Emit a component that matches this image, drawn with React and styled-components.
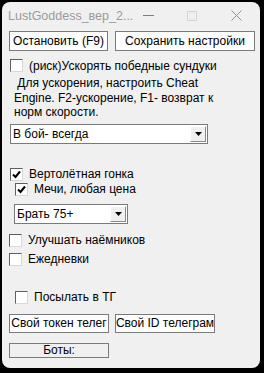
import React from "react";
import styled, { createGlobalStyle } from "styled-components";

const Global = createGlobalStyle`
  html, body {
    margin: 0;
    padding: 0;
    background: #000;
  }
  body {
    font-family: "Liberation Sans", Arial, sans-serif;
  }
`;

const Window = styled.div`
  margin: 2px 0 0 2px;
  width: 258px;
  height: 366px;
  background: #f0f0f0;
  border-radius: 8px;
  overflow: hidden;
  box-sizing: border-box;
`;

const TitleBar = styled.div`
  height: 27px;
  display: flex;
  align-items: center;
  padding-left: 6px;
  font-family: "Liberation Sans", Arial, sans-serif;
  font-size: 12.5px;
  color: #9b9b9b;
`;

const TitleText = styled.span`
  flex: 1 1 0;
  min-width: 0;
  white-space: nowrap;
`;

const Controls = styled.div`
  display: flex;
  flex-shrink: 0;
  margin-right: 2px;
`;

const Ctl = styled.div`
  width: 44px;
  height: 27px;
  flex-shrink: 0;
  display: flex;
  align-items: center;
  justify-content: center;
`;

const Body = styled.div`
  padding-left: 7px;
  display: flex;
  flex-direction: column;
  align-items: flex-start;
  font-size: 12px;
  color: #000;
`;

const Row = styled.div`
  display: flex;
  align-items: center;
  gap: ${(p) => p.$gap ?? 6}px;
  margin-top: ${(p) => p.$top ?? 0}px;
  margin-left: ${(p) => p.$left ?? 0}px;
  height: ${(p) => p.$h ?? 15}px;
`;

const Button = styled.div`
  width: ${(p) => p.$w}px;
  height: ${(p) => p.$h ?? 20}px;
  box-sizing: border-box;
  border: 1px solid #7a7a7a;
  background: #fdfdfd;
  display: flex;
  align-items: center;
  justify-content: center;
  font-size: 12px;
  white-space: nowrap;
  overflow: hidden;
`;

const Box = styled.div`
  width: 13px;
  height: 13px;
  box-sizing: border-box;
  background: #fff;
  border: 1px solid #5f5f5f;
  border-right-color: #d8d8d8;
  border-bottom-color: #d8d8d8;
  display: flex;
  align-items: center;
  justify-content: center;
`;

const Label = styled.span`
  white-space: nowrap;
`;

const Note = styled.div`
  margin-top: 3px;
  margin-left: 5px;
  width: 225px;
  line-height: 14.5px;
  font-size: 12px;
`;

const Select = styled.div`
  margin-top: ${(p) => p.$top}px;
  margin-left: ${(p) => p.$left ?? 0}px;
  width: ${(p) => p.$w}px;
  height: 20px;
  box-sizing: border-box;
  background: #fff;
  border: 1px solid #7a7a7a;
  display: flex;
  align-items: center;
  padding-left: 2px;
`;

const SelectText = styled.span`
  flex: 1;
  white-space: nowrap;
`;

const Arrow = styled.div`
  width: 16px;
  height: 16px;
  margin-right: 1px;
  box-sizing: border-box;
  background: #f0f0f0;
  border: 1px solid #fff;
  border-right-color: #8a8a8a;
  border-bottom-color: #8a8a8a;
  display: flex;
  align-items: center;
  justify-content: center;
`;

const Status = styled.div`
  margin-top: 10px;
  width: 100px;
  height: 15px;
  box-sizing: border-box;
  border: 1px solid #7a7a7a;
  background: #f0f0f0;
  display: flex;
  align-items: center;
  justify-content: center;
  font-size: 12px;
`;

const Check = ({ on }) => (
  <Box>
    {on && (
      <svg width="9" height="9" viewBox="0 0 9 9">
        <path d="M1 4.5 L3.5 7 L8 1.5" fill="none" stroke="#000" strokeWidth="2" />
      </svg>
    )}
  </Box>
);

const CheckRow = ({ on, text, top, left }) => (
  <Row $top={top} $left={left}>
    <Check on={on} />
    <Label>{text}</Label>
  </Row>
);

const Dropdown = ({ text, w, top, left }) => (
  <Select $w={w} $top={top} $left={left}>
    <SelectText>{text}</SelectText>
    <Arrow>
      <svg width="7" height="4" viewBox="0 0 7 4">
        <path d="M0 0 H7 L3.5 4 Z" fill="#000" />
      </svg>
    </Arrow>
  </Select>
);

export default function App() {
  return (
    <>
      <Global />
      <Window>
        <TitleBar>
          <TitleText>LustGoddess_вер_2...</TitleText>
          <Controls>
            <Ctl>
              <svg width="11" height="2" viewBox="0 0 11 2">
                <rect width="11" height="1" fill="#7f7f7f" />
              </svg>
            </Ctl>
            <Ctl>
              <svg width="10" height="10" viewBox="0 0 10 10">
                <rect x="0.5" y="0.5" width="9" height="9" rx="1" fill="none" stroke="#d2d2d2" />
              </svg>
            </Ctl>
            <Ctl>
              <svg width="11" height="11" viewBox="0 0 11 11">
                <path d="M0.5 0.5 L10.5 10.5 M10.5 0.5 L0.5 10.5" stroke="#8f8f8f" strokeWidth="1" />
              </svg>
            </Ctl>
          </Controls>
        </TitleBar>
        <Body>
          <Row $top={2} $gap={7} $h={20}>
            <Button $w={99}>Остановить (F9)</Button>
            <Button $w={140}>Сохранить настройки</Button>
          </Row>
          <CheckRow text="(риск)Ускорять победные сундуки" top={7} left={1} />
          <Note>
            &nbsp;Для ускорения, настроить Cheat Engine. F2-ускорение, F1- возврат к норм скорости.
          </Note>
          <Dropdown text="В бой- всегда" w={198} top={4} left={1} />
          <CheckRow on text="Вертолётная гонка" top={23} left={1} />
          <CheckRow on text="Мечи, любая цена" top={0} left={6} />
          <Dropdown text="Брать 75+" w={114} top={7} left={5} />
          <CheckRow text="Улучшать наёмников" top={9} />
          <CheckRow text="Ежедневки" top={4} />
          <CheckRow text="Посылать в ТГ" top={23} left={6} />
          <Row $top={9} $gap={6} $h={19}>
            <Button $w={100} $h={19}>Свой токен телег</Button>
            <Button $w={100} $h={19}>Свой ID телеграм</Button>
          </Row>
          <Status>Боты:</Status>
        </Body>
      </Window>
    </>
  );
}
